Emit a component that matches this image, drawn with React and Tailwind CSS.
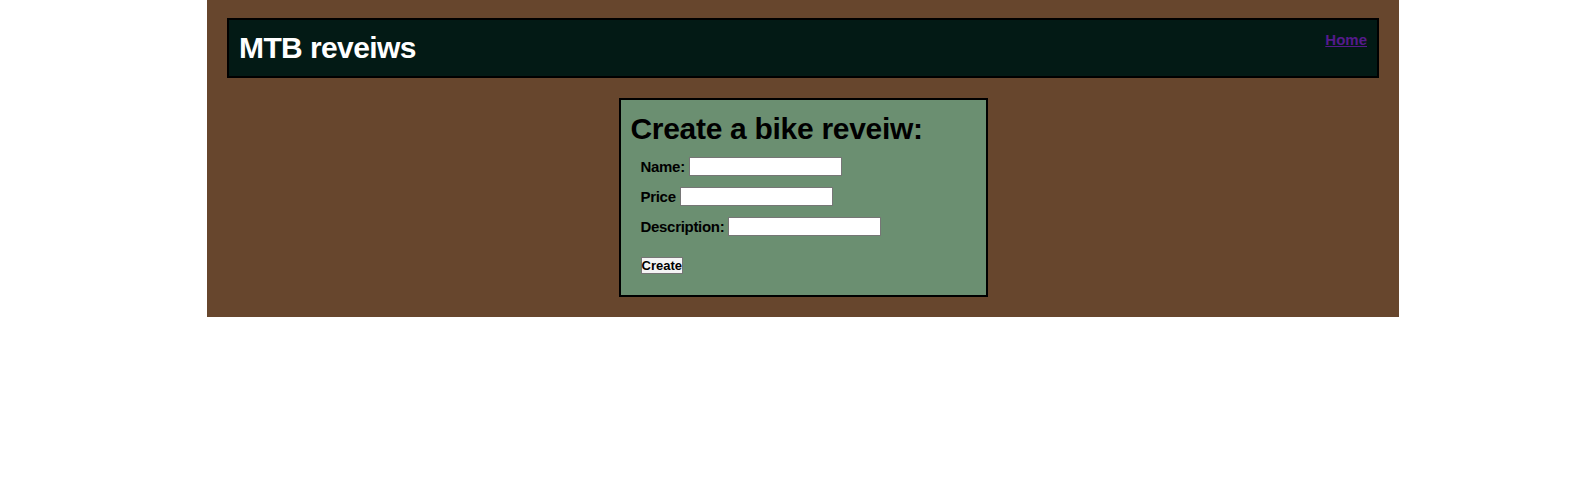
const font = { fontFamily: '"Liberation Sans", Arial, sans-serif' };

const Field = ({ label }) => (
  <div className="flex items-center h-[19px]">
    <label className="text-[15px] leading-[17px] font-bold tracking-[-0.3px] text-black">{label}</label>
    <input
      type="text"
      className="ml-[4px] w-[153px] h-[19px] border border-[#767676] bg-white"
    />
  </div>
);

export default function App() {
  return (
    <div className="bg-white min-h-[479px]" style={font}>
      <div className="w-[1192px] ml-[207px] bg-[#67462d] px-[20px] pt-[18px] pb-[20px]">
        <header className="border-2 border-black bg-[#031a15] flex justify-between items-start px-[10px] py-[11px]">
          <h1 className="text-[30px] leading-[34px] font-bold tracking-[-0.6px] text-white">MTB reveiws</h1>
          <a href="#" className="text-[15px] leading-[17px] font-bold text-[#551a8b] underline">
            Home
          </a>
        </header>

        <main className="mt-[20px] flex justify-center">
          <div className="w-[369px] border-2 border-black bg-[#6b8f71] pt-[12px] pl-[10px] pb-[21px]">
            <h2 className="text-[30px] leading-[34px] font-bold tracking-[-0.3px] text-black">Create a bike reveiw:</h2>
            <form className="pl-[10px] mt-[11px] flex flex-col gap-[11px]">
              <Field label="Name:" />
              <Field label="Price" />
              <Field label="Description:" />
              <button
                type="button"
                className="self-start mt-[10px] bg-[#f4f4f4] border border-[#767676] px-0 py-[1px] text-[13px] leading-[13px] font-bold text-black"
              >
                Create
              </button>
            </form>
          </div>
        </main>
      </div>
    </div>
  );
}
